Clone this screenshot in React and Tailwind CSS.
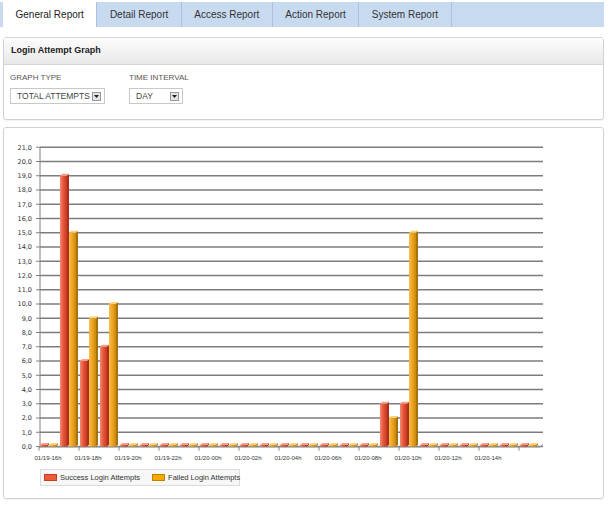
import React from 'react';

const U = 14.25;
const BASE = 445.5;
const X0 = 39;
const yOf = (v) => BASE - v * U;

// [success, failed] per hour, starting 01/19-16h
const data = [
  [0, 0], [19, 15], [6, 9], [7, 10], [0, 0], [0, 0], [0, 0], [0, 0], [0, 0],
  [0, 0], [0, 0], [0, 0], [0, 0], [0, 0], [0, 0], [0, 0], [0, 0], [3, 2],
  [3, 15], [0, 0], [0, 0], [0, 0], [0, 0], [0, 0], [0, 0],
];

const xLabels = [
  '01/19-16h', '01/19-18h', '01/19-20h', '01/19-22h', '01/20-00h', '01/20-02h',
  '01/20-04h', '01/20-06h', '01/20-08h', '01/20-10h', '01/20-12h', '01/20-14h',
];

const Bar = ({ x, v, kind }) => {
  const w = 7;
  const d = 2;
  const top = v === 0 ? BASE - 1.5 : yOf(v);
  const side = kind === 'red' ? '#a9301a' : '#a8720c';
  const cap = kind === 'red' ? '#f8a08a' : '#fcd27a';
  return (
    <g>
      <rect x={x} y={top} width={w} height={BASE - top} fill={`url(#${kind})`} />
      <polygon
        points={`${x + w},${top} ${x + w + d},${top - d} ${x + w + d},${BASE - d} ${x + w},${BASE}`}
        fill={side}
      />
      <polygon
        points={`${x},${top} ${x + d},${top - d} ${x + w + d},${top - d} ${x + w},${top}`}
        fill={cap}
      />
    </g>
  );
};

const Chart = () => (
  <svg width="598" height="335" viewBox="4 127 598 335" className="block">
    <defs>
      <linearGradient id="red" x1="0" x2="1" y1="0" y2="0">
        <stop offset="0" stopColor="#f58a6e" />
        <stop offset="0.5" stopColor="#e5533a" />
        <stop offset="1" stopColor="#c83820" />
      </linearGradient>
      <linearGradient id="orange" x1="0" x2="1" y1="0" y2="0">
        <stop offset="0" stopColor="#fbbf4a" />
        <stop offset="0.5" stopColor="#eda220" />
        <stop offset="1" stopColor="#c98a10" />
      </linearGradient>
    </defs>

    {Array.from({ length: 22 }, (_, v) => (
      <g key={v}>
        <line x1="36" x2="40" y1={yOf(v)} y2={yOf(v)} stroke="#808080" strokeWidth="1" />
        <line x1="40" x2="543" y1={yOf(v)} y2={yOf(v)} stroke="#7c7c7c" strokeWidth="1.4" />
        <text
          x="32"
          y={yOf(v) + 2.3}
          textAnchor="end"
          fontSize="6.5"
          fontFamily="'DejaVu Sans', sans-serif"
          fill="#333"
        >
          {v},0
        </text>
      </g>
    ))}
    <line x1="40" x2="40" y1={yOf(21)} y2={BASE + 1} stroke="#808080" strokeWidth="1" />
    <line x1="39" x2="540" y1={BASE + 0.5} y2={BASE + 0.5} stroke="#999" strokeWidth="1" />
    <line x1="540" x2="543" y1={BASE + 0.5} y2={BASE - 2} stroke="#999" strokeWidth="1" />

    {Array.from({ length: 13 }, (_, k) => (
      <line
        key={k}
        x1={X0 + 40 * k}
        x2={X0 + 40 * k}
        y1={BASE}
        y2={BASE + 4}
        stroke="#808080"
        strokeWidth="1"
      />
    ))}
    {xLabels.map((l, k) => (
      <text
        key={l}
        x={X0 + 40 * k + 9}
        y="459"
        textAnchor="middle"
        fontSize="6"
        fontFamily="'Liberation Sans', sans-serif"
        fill="#333"
      >
        {l}
      </text>
    ))}

    {data.map(([s, f], i) => (
      <g key={i}>
        <Bar x={X0 + 20 * i + 1} v={s} kind="red" />
        <Bar x={X0 + 20 * i + 10} v={f} kind="orange" />
      </g>
    ))}
  </svg>
);

const tabs = ['General Report', 'Detail Report', 'Access Report', 'Action Report', 'System Report'];

const Select = ({ value, width }) => (
  <div
    className={`${width} h-[16px] flex items-center justify-between pl-[6px] pr-[3px] border border-[#c8c8c8] bg-white`}
  >
    <span className="text-[8.5px] text-[#444]">{value}</span>
    <span className="w-[9px] h-[9px] border border-[#999] bg-[#e4e4e4] flex items-center justify-center">
      <svg width="5" height="3" viewBox="0 0 5 3">
        <polygon points="0,0 5,0 2.5,3" fill="#222" />
      </svg>
    </span>
  </div>
);

const App = () => {
  return (
    <div className="w-[609px] h-[505px] bg-white pt-[2px] font-['Liberation_Sans',Arial,sans-serif] text-[#333] overflow-hidden">
      <div className="flex h-[25px] w-[604px] bg-[#c8daf0] pl-[3px]">
        {tabs.map((t, i) => (
          <div
            key={t}
            className={`flex items-center px-[12.5px] text-[10px] border-r border-[#abc2de] whitespace-nowrap ${
              i === 0 ? 'bg-white text-[#222]' : 'text-[#333]'
            }`}
          >
            {t}
          </div>
        ))}
      </div>

      <div className="ml-[3px] mt-[9.5px] w-[601px] border border-[#d2d2d2] rounded-[3px] shadow-[0_1px_1px_rgba(0,0,0,0.06)]">
        <div className="h-[27px] flex items-center pl-[7px] bg-gradient-to-b from-[#fdfdfd] to-[#e8e8e8] border-b border-[#d6d6d6]">
          <span className="text-[9px] font-bold text-[#222]">Login Attempt Graph</span>
        </div>
        <div className="flex gap-[24px] pl-[6px] pt-[8px] pb-[15px]">
          <div className="flex flex-col">
            <span className="text-[8px] leading-[10px] text-[#555]">GRAPH TYPE</span>
            <div className="mt-[5.5px]">
              <Select value="TOTAL ATTEMPTS" width="w-[95px]" />
            </div>
          </div>
          <div className="flex flex-col">
            <span className="text-[8px] leading-[10px] text-[#555]">TIME INTERVAL</span>
            <div className="mt-[5.5px]">
              <Select value="DAY" width="w-[54px]" />
            </div>
          </div>
        </div>
      </div>

      <div className="ml-[3px] mt-[7px] w-[601px] h-[372px] border border-[#d2d2d2] rounded-[3px] shadow-[0_1px_1px_rgba(0,0,0,0.06)]">
        <Chart />
        <div className="ml-[36px] mt-[5.5px] w-[200px] h-[17px] flex items-center gap-[3px] pl-[3px] border border-[#dcdcdc] bg-[#f7f7f7] whitespace-nowrap">
          <span className="shrink-0 w-[13px] h-[7px] bg-[#f0583a] border border-[#c0401f]" />
          <span className="text-[7.5px] leading-[9px] text-[#333] mr-[9px]">Success Login Attempts</span>
          <span className="shrink-0 w-[13px] h-[7px] bg-[#f5a800] border border-[#c08000]" />
          <span className="text-[7.5px] leading-[9px] text-[#333]">Failed Login Attempts</span>
        </div>
      </div>
    </div>
  );
};

export default App;
